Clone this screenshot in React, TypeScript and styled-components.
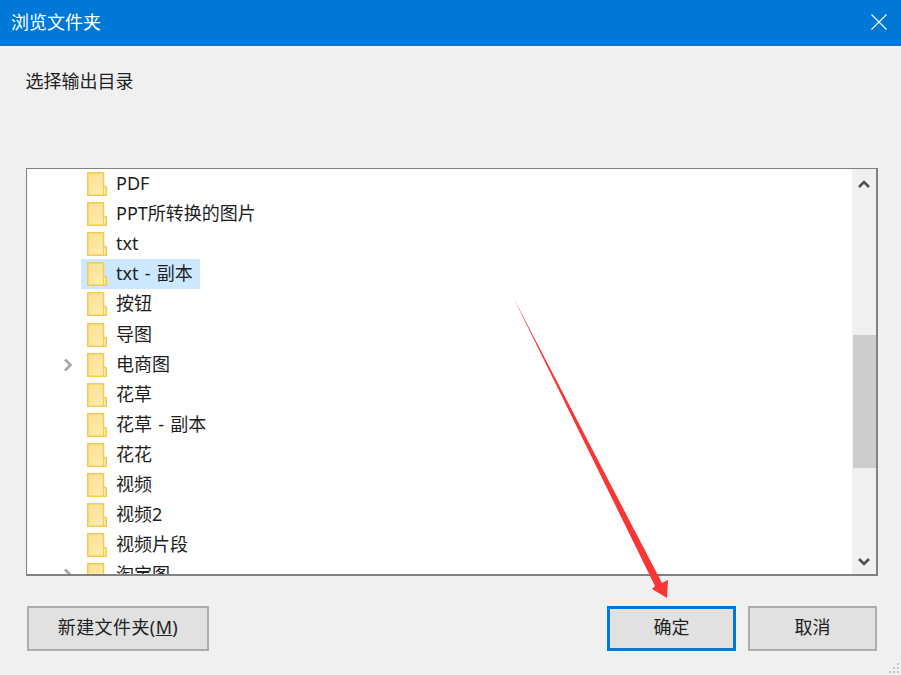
import React from 'react';
import { createGlobalStyle, styled } from 'styled-components';

const FONT = `"Noto Sans", "Noto Sans CJK SC", sans-serif`;

const folders = [
  { name: 'PDF' },
  { name: 'PPT所转换的图片' },
  { name: 'txt' },
  { name: 'txt - 副本', selected: true },
  { name: '按钮' },
  { name: '导图' },
  { name: '电商图', expandable: true },
  { name: '花草' },
  { name: '花草 - 副本' },
  { name: '花花' },
  { name: '视频' },
  { name: '视频2' },
  { name: '视频片段' },
  { name: '淘宝图', expandable: true },
];

function FolderIcon() {
  return (
    <FolderSvg viewBox="0 0 20 24">
      <defs>
        <linearGradient id="folderFill" x1="0" y1="0" x2="1" y2="1">
          <stop offset="0" stopColor="#fbe08e" />
          <stop offset="1" stopColor="#ffedb5" />
        </linearGradient>
      </defs>
      <path d="M0.75 0.75H16.5V14L19.25 15V23.25H0.75Z" fill="url(#folderFill)" stroke="#f2cb50" strokeWidth="1.5" />
      <path d="M16.5 14V23.25" stroke="#f2cb50" />
    </FolderSvg>
  );
}

function App() {
  return (
    <Dialog>
      <GlobalStyle />
      <TitleBar>
        <TitleText>浏览文件夹</TitleText>
        <CloseIcon viewBox="0 0 16 16">
          <path d="M0.5 0.5L15.5 15.5M15.5 0.5L0.5 15.5" stroke="#fff" strokeWidth="1.1" />
        </CloseIcon>
      </TitleBar>
      <Body>
        <Prompt>选择输出目录</Prompt>
        <TreeBox>
          <TreeList>
            {folders.map((folder) => (
              <Row key={folder.name}>
                <Expander>
                  {folder.expandable && (
                    <svg width="10" height="14" viewBox="0 0 10 14">
                      <path d="M2 1.5L7.5 7L2 12.5" fill="none" stroke="#a6a6a6" strokeWidth="2.6" />
                    </svg>
                  )}
                </Expander>
                <RowContent $selected={folder.selected}>
                  <FolderIcon />
                  <RowLabel>{folder.name}</RowLabel>
                </RowContent>
              </Row>
            ))}
          </TreeList>
          <ScrollBar>
            <ScrollButton>
              <svg width="12" height="8" viewBox="0 0 12 8">
                <path d="M1 7L6 2L11 7" fill="none" stroke="#505050" strokeWidth="2.6" />
              </svg>
            </ScrollButton>
            <ScrollTrack>
              <ScrollThumb />
            </ScrollTrack>
            <ScrollButton $down>
              <svg width="12" height="8" viewBox="0 0 12 8">
                <path d="M1 1L6 6L11 1" fill="none" stroke="#505050" strokeWidth="2.6" />
              </svg>
            </ScrollButton>
          </ScrollBar>
        </TreeBox>
        <Footer>
          <Button $wide>
            新建文件夹(<u>M</u>)
          </Button>
          <FooterRight>
            <Button $primary>确定</Button>
            <Button>取消</Button>
          </FooterRight>
        </Footer>
      </Body>
      <Grip viewBox="0 0 14 14">
        <g fill="#c4c4c4">
          <rect x="10" y="2" width="2" height="2" />
          <rect x="6" y="6" width="2" height="2" />
          <rect x="10" y="6" width="2" height="2" />
          <rect x="2" y="10" width="2" height="2" />
          <rect x="6" y="10" width="2" height="2" />
          <rect x="10" y="10" width="2" height="2" />
        </g>
      </Grip>
      <Annotation viewBox="0 0 901 675">
        <polygon points="513,297 662,583 668,580 667,598 652,589 655,586" fill="#fa3535" />
      </Annotation>
    </Dialog>
  );
}

const GlobalStyle = createGlobalStyle`
  html, body {
    margin: 0;
    padding: 0;
    background: #f0f0f0;
  }
  * {
    box-sizing: border-box;
  }
`;

const Dialog = styled.div`
  position: relative;
  width: 901px;
  height: 675px;
  display: flex;
  flex-direction: column;
  background: #f0f0f0;
  font-family: ${FONT};
  color: #222;
  overflow: hidden;
`;

const TitleBar = styled.header`
  flex: none;
  height: 46px;
  padding: 0 14px 3px 11px;
  display: flex;
  align-items: center;
  justify-content: space-between;
  background: #0078d7;
`;

const TitleText = styled.span`
  color: #fff;
  font-size: 18px;
  line-height: 26px;
`;

const CloseIcon = styled.svg`
  width: 16px;
  height: 16px;
`;

const Body = styled.main`
  flex: 1;
  display: flex;
  flex-direction: column;
  padding: 22px 23px 0 26px;
`;

const Prompt = styled.p`
  margin: 0;
  height: 100px;
  font-size: 18px;
  line-height: 26px;
  text-indent: -0.5px;
`;

const TreeBox = styled.div`
  height: 408px;
  display: flex;
  background: #fff;
  border: 2px solid #828282;
  border-width: 1px 2px 2px 1px;
  overflow: hidden;
`;

const TreeList = styled.ul`
  flex: 1;
  margin: 0;
  padding: 0 0 0 29px;
  list-style: none;
  overflow: hidden;
`;

const Row = styled.li`
  height: 30.1px;
  display: flex;
  align-items: center;
`;

const Expander = styled.span`
  flex: none;
  width: 24px;
  margin-right: 1px;
  display: flex;
  justify-content: center;
`;

const RowContent = styled.div<{ $selected?: boolean }>`
  height: 30px;
  padding: 0 7px 0 6px;
  display: flex;
  align-items: center;
  gap: 9px;
  background: ${(p) => (p.$selected ? '#cce8ff' : 'transparent')};
`;

const FolderSvg = styled.svg`
  flex: none;
  width: 20px;
  height: 24px;
`;

const RowLabel = styled.span`
  padding-bottom: 2px;
  font-size: 18px;
  line-height: 26px;
  word-spacing: 1.5px;
  white-space: nowrap;
  color: #1e1e1e;
`;

const ScrollBar = styled.div`
  flex: none;
  width: 24px;
  display: flex;
  flex-direction: column;
  background: #f0f0f0;
`;

const ScrollButton = styled.div<{ $down?: boolean }>`
  flex: none;
  height: 30px;
  padding-top: ${(p) => (p.$down ? '5px' : '0')};
  display: flex;
  align-items: center;
  justify-content: center;
`;

const ScrollTrack = styled.div`
  flex: 1;
  padding: 136px 0 0 1px;
`;

const ScrollThumb = styled.div`
  height: 133px;
  background: #cdcdcd;
`;

const Footer = styled.footer`
  margin-top: 30px;
  padding: 0 1px 0 1px;
  display: flex;
  justify-content: space-between;
`;

const FooterRight = styled.div`
  display: flex;
  gap: 12px;
`;

const Button = styled.button<{ $primary?: boolean; $wide?: boolean }>`
  width: ${(p) => (p.$wide ? '182px' : '129px')};
  height: 45px;
  padding: 0 0 3px;
  background: #e1e1e1;
  border: ${(p) => (p.$primary ? '3px solid #0078d7' : '2px solid #adadad')};
  border-radius: 0;
  font-family: ${FONT};
  font-size: 18px;
  line-height: 26px;
  letter-spacing: ${(p) => (p.$wide ? '0.4px' : '0')};
  color: #222;
`;

const Grip = styled.svg`
  position: absolute;
  right: 0;
  bottom: 0;
  width: 14px;
  height: 14px;
`;

const Annotation = styled.svg`
  position: absolute;
  inset: 0;
  width: 901px;
  height: 675px;
  pointer-events: none;
`;

export default App;
